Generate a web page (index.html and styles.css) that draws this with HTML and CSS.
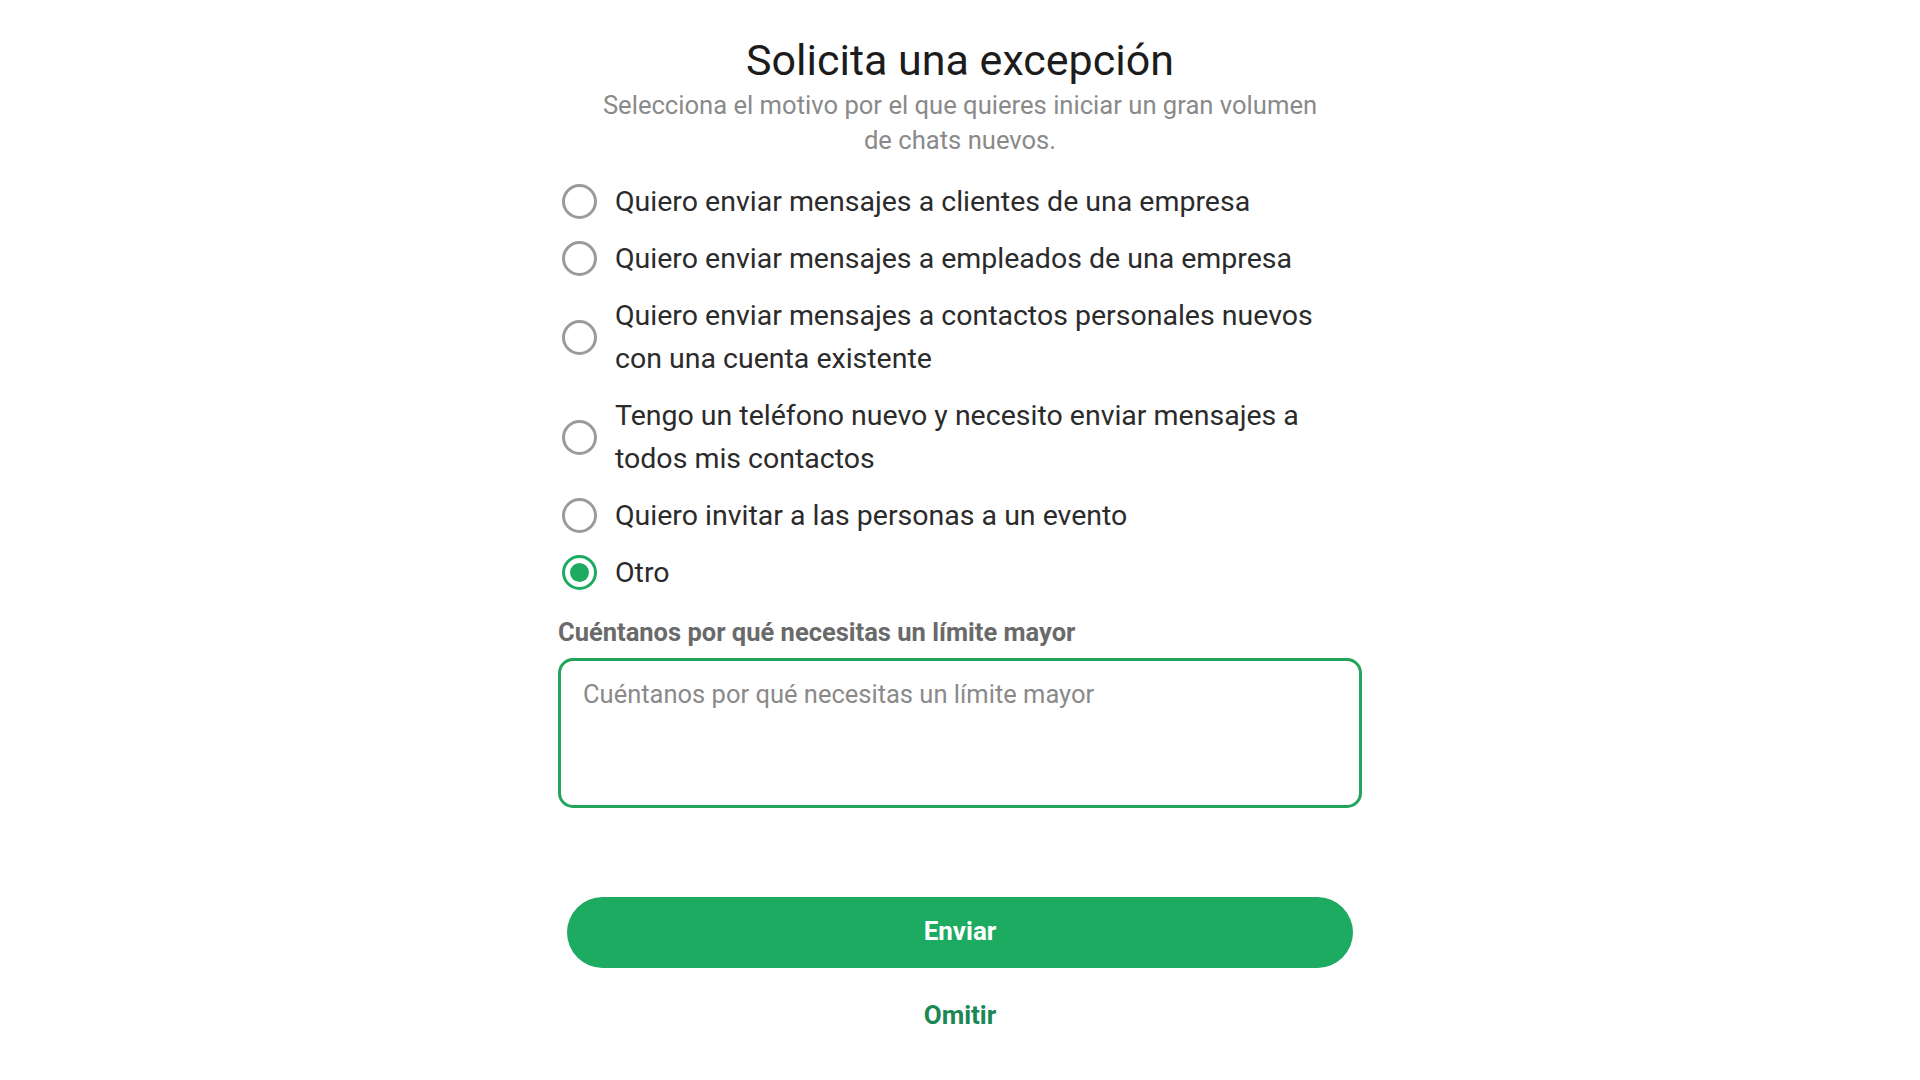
FILE: index.html
```html
<!DOCTYPE html>
<html lang="es">
<head>
<meta charset="utf-8">
<title>Solicita una excepción</title>
<link rel="stylesheet" href="styles.css">
</head>
<body>
<main class="sheet">
  <h1 class="title">Solicita una excepción</h1>
  <p class="subtitle">Selecciona el motivo por el que quieres iniciar un gran volumen de chats nuevos.</p>
  <div class="options">
    <label class="option"><span class="radio"></span><span class="option-text">Quiero enviar mensajes a clientes de una empresa</span></label>
    <label class="option"><span class="radio"></span><span class="option-text">Quiero enviar mensajes a empleados de una empresa</span></label>
    <label class="option"><span class="radio"></span><span class="option-text">Quiero enviar mensajes a contactos personales nuevos con una cuenta existente</span></label>
    <label class="option"><span class="radio"></span><span class="option-text">Tengo un teléfono nuevo y necesito enviar mensajes a todos mis contactos</span></label>
    <label class="option"><span class="radio"></span><span class="option-text">Quiero invitar a las personas a un evento</span></label>
    <label class="option"><span class="radio checked"></span><span class="option-text">Otro</span></label>
  </div>
  <div class="field-label">Cuéntanos por qué necesitas un límite mayor</div>
  <textarea class="field" placeholder="Cuéntanos por qué necesitas un límite mayor"></textarea>
  <button class="primary" type="button">Enviar</button>
  <button class="link" type="button">Omitir</button>
</main>
</body>
</html>
```

FILE: styles.css
```css
html, body {
  margin: 0;
  padding: 0;
  background: #ffffff;
}
body {
  font-family: Roboto, "Liberation Sans", Arial, sans-serif;
  color: #2a2a2a;
}
.sheet {
  width: 804px;
  margin: 0 auto;
  padding-top: 36px;
  display: flex;
  flex-direction: column;
  align-items: stretch;
}
.title {
  margin: 0;
  font-size: 43px;
  line-height: 48px;
  font-weight: 400;
  color: #1c1c1c;
  text-align: center;
}
.subtitle {
  margin: 4px auto 0;
  max-width: 740px;
  font-size: 25.6px;
  line-height: 35px;
  color: #8a8a8a;
  text-align: center;
}
.options {
  margin-top: 22px;
  display: flex;
  flex-direction: column;
  gap: 14px;
}
.option {
  display: flex;
  align-items: center;
  gap: 18px;
  padding-left: 4px;
  cursor: pointer;
}
.radio {
  flex: 0 0 auto;
  box-sizing: border-box;
  width: 35px;
  height: 35px;
  border: 3px solid #9b9b9b;
  border-radius: 50%;
  display: flex;
  align-items: center;
  justify-content: center;
}
.radio.checked {
  border-color: #1daa61;
}
.radio.checked::after {
  content: "";
  width: 19px;
  height: 19px;
  border-radius: 50%;
  background: #1daa61;
}
.option-text {
  font-size: 28.5px;
  line-height: 43px;
  color: #2b2b2b;
}
.field-label {
  margin-top: 22px;
  font-size: 25.5px;
  line-height: 32px;
  font-weight: 700;
  color: #6a6a6a;
}
.field {
  margin-top: 10px;
  box-sizing: border-box;
  width: 100%;
  height: 150px;
  border: 3px solid #22a45a;
  border-radius: 15px;
  padding: 17px 22px;
  font-family: inherit;
  font-size: 25.5px;
  line-height: 32px;
  color: #2b2b2b;
  resize: none;
  outline: none;
}
.field::placeholder {
  color: #8a8a8a;
}
.primary {
  margin: 89px 9px 0;
  height: 71px;
  padding: 0 0 4px;
  border: none;
  border-radius: 36px;
  background: #1daa61;
  color: #ffffff;
  font-family: inherit;
  font-size: 26px;
  font-weight: 700;
  cursor: pointer;
}
.link {
  margin: 31px auto 0;
  border: none;
  background: none;
  padding: 0;
  color: #1b8755;
  font-family: inherit;
  font-size: 26px;
  line-height: 32px;
  font-weight: 700;
  cursor: pointer;
}
```
